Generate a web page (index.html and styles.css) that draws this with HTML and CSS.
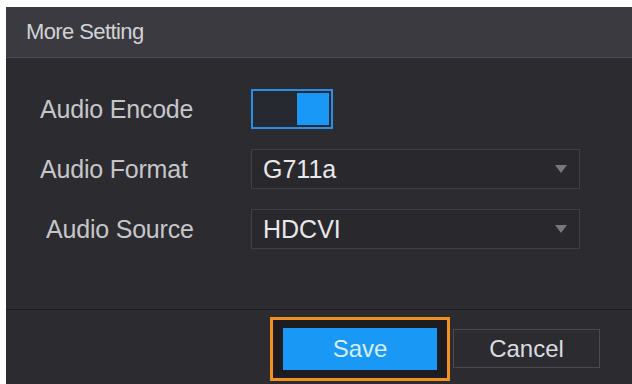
FILE: index.html
```html
<!DOCTYPE html>
<html>
<head>
<meta charset="utf-8">
<link rel="stylesheet" href="styles.css">
</head>
<body>
<div class="dialog">
  <div class="header">More Setting</div>
  <div class="content">
    <div class="form">
      <div class="label">Audio Encode</div>
      <div class="control">
        <div class="toggle"><span class="knob"></span></div>
      </div>
      <div class="label">Audio Format</div>
      <div class="control">
        <div class="select"><span class="value">G711a</span><span class="arrow"></span></div>
      </div>
      <div class="label indent">Audio Source</div>
      <div class="control">
        <div class="select"><span class="value">HDCVI</span><span class="arrow"></span></div>
      </div>
    </div>
  </div>
  <div class="footer">
    <div class="highlight"><button class="btn primary">Save</button></div>
    <button class="btn secondary">Cancel</button>
  </div>
</div>
</body>
</html>
```

FILE: styles.css
```css
html, body {
  margin: 0;
  padding: 0;
  background: #ffffff;
}
body {
  width: 632px;
  height: 384px;
  overflow: hidden;
  padding: 7px 0 0 6px;
  box-sizing: border-box;
  font-family: "Liberation Sans", Arial, sans-serif;
}
.dialog {
  width: 626px;
  height: 377px;
  background: #2b2b30;
  display: flex;
  flex-direction: column;
}
.header {
  height: 50px;
  background: #3a3a40;
  border-bottom: 1px solid #4c4c52;
  color: #d2d2d6;
  font-size: 22px;
  letter-spacing: -0.6px;
  display: flex;
  align-items: center;
  padding-left: 20px;
  box-sizing: content-box;
}
.content {
  height: 252px;
  border-bottom: 1px solid #1c1c20;
  box-sizing: border-box;
  padding-top: 31px;
}
.form {
  display: grid;
  grid-template-columns: 245px 329px;
  grid-auto-rows: 40px;
  row-gap: 20px;
}
.label {
  color: #c6c6ca;
  font-size: 25px;
  padding-left: 34px;
  display: flex;
  align-items: center;
  letter-spacing: -0.2px;
}
.label.indent {
  padding-left: 40px;
}
.control {
  display: flex;
  align-items: center;
}
.toggle {
  width: 82px;
  height: 40px;
  box-sizing: border-box;
  border: 2px solid #2a8fe6;
  padding: 2px;
  background: #262930;
  display: flex;
  justify-content: flex-end;
}
.knob {
  width: 32px;
  height: 32px;
  background: #1a98f8;
}
.select {
  width: 329px;
  height: 40px;
  box-sizing: border-box;
  border: 1px solid #404046;
  background: #28282d;
  display: flex;
  align-items: center;
  justify-content: space-between;
  padding: 0 12px 0 11px;
}
.value {
  color: #e8e8ea;
  font-size: 25px;
}
.arrow {
  width: 0;
  height: 0;
  border-left: 6px solid transparent;
  border-right: 6px solid transparent;
  border-top: 8px solid #77777c;
}
.footer {
  flex: 1;
  display: flex;
  justify-content: flex-end;
  align-items: center;
  gap: 3px;
  padding: 3px 32px 0 0;
}
.highlight {
  border: 3px solid #f0921f;
  padding: 8px 10px;
  background: #1d1d21;
  display: flex;
}
.btn {
  font-family: "Liberation Sans", Arial, sans-serif;
  font-size: 24px;
  margin: 0;
  cursor: pointer;
}
.primary {
  width: 154px;
  height: 42px;
  border: none;
  background: #1a98f5;
  color: #d6efff;
}
.secondary {
  width: 147px;
  height: 39px;
  border: 1px solid #4a4a50;
  background: #2b2b30;
  color: #dcdce0;
}
```
